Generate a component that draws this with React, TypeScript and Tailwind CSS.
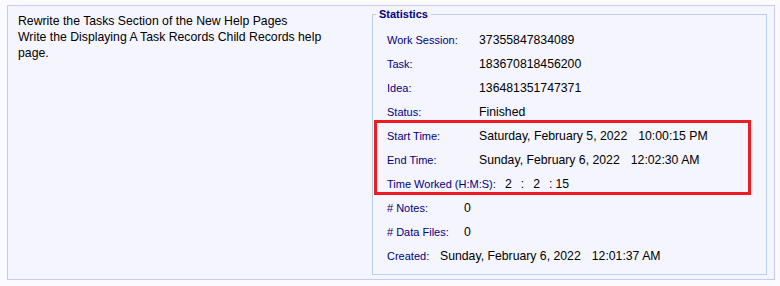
const font = { fontFamily: '"Liberation Sans", Arial, sans-serif' }

function Row({ label, w, children }: { label: string; w: string; children: React.ReactNode }) {
  return (
    <div className="flex h-[24px] items-center pl-[14px]">
      <div className={`${w} shrink-0 text-[11px] text-[#000080]`}>{label}</div>
      <div className="flex text-[12.25px] text-black">{children}</div>
    </div>
  )
}

function DateTime({ date, time }: { date: string; time: string }) {
  return (
    <span className="flex gap-[11px]">
      <span>{date}</span>
      <span>{time}</span>
    </span>
  )
}

export default function App() {
  return (
    <div className="h-[286px] w-[780px] bg-[#fbfbff] pt-[5px] pl-[7px]" style={font}>
      <div className="flex h-[275px] w-[768px] border border-[#c8c8fa] bg-[#f5f5ff]">
        <div className="flex-1 pl-[10px] pt-[7px]">
          <p className="w-[335px] text-[12.25px] leading-[16px] text-black">
            Rewrite the Tasks Section of the New Help Pages
            <br />
            Write the Displaying A Task Records Child Records help page.
          </p>
        </div>

        <fieldset className="relative mr-[7px] mt-[2px] mb-[4px] w-[395px] border border-[#b8cfe6] pt-[7px]">
          <legend className="ml-[3px] px-[3px] text-[11px] font-bold leading-[13px] text-[#000080]">
            Statistics
          </legend>

          <Row label="Work Session:" w="w-[92px]">37355847834089</Row>
          <Row label="Task:" w="w-[92px]">183670818456200</Row>
          <Row label="Idea:" w="w-[92px]">136481351747371</Row>
          <Row label="Status:" w="w-[92px]">Finished</Row>
          <Row label="Start Time:" w="w-[92px]">
            <DateTime date="Saturday, February 5, 2022" time="10:00:15 PM" />
          </Row>
          <Row label="End Time:" w="w-[92px]">
            <DateTime date="Sunday, February 6, 2022" time="12:02:30 AM" />
          </Row>
          <Row label="Time Worked (H:M:S):" w="w-[118px]">
            <span>2</span>
            <span className="ml-[9px]">:</span>
            <span className="ml-[9px]">2</span>
            <span className="ml-[9px]">:</span>
            <span className="ml-[3px]">15</span>
          </Row>
          <Row label="# Notes:" w="w-[77px]">0</Row>
          <Row label="# Data Files:" w="w-[77px]">0</Row>
          <Row label="Created:" w="w-[53px]">
            <DateTime date="Sunday, February 6, 2022" time="12:01:37 AM" />
          </Row>

          {/* highlight box */}
          <div className="pointer-events-none absolute left-[1px] top-[99px] h-[75px] w-[377px] border-[3px] border-[#ec1c24]" />
        </fieldset>
      </div>
    </div>
  )
}
